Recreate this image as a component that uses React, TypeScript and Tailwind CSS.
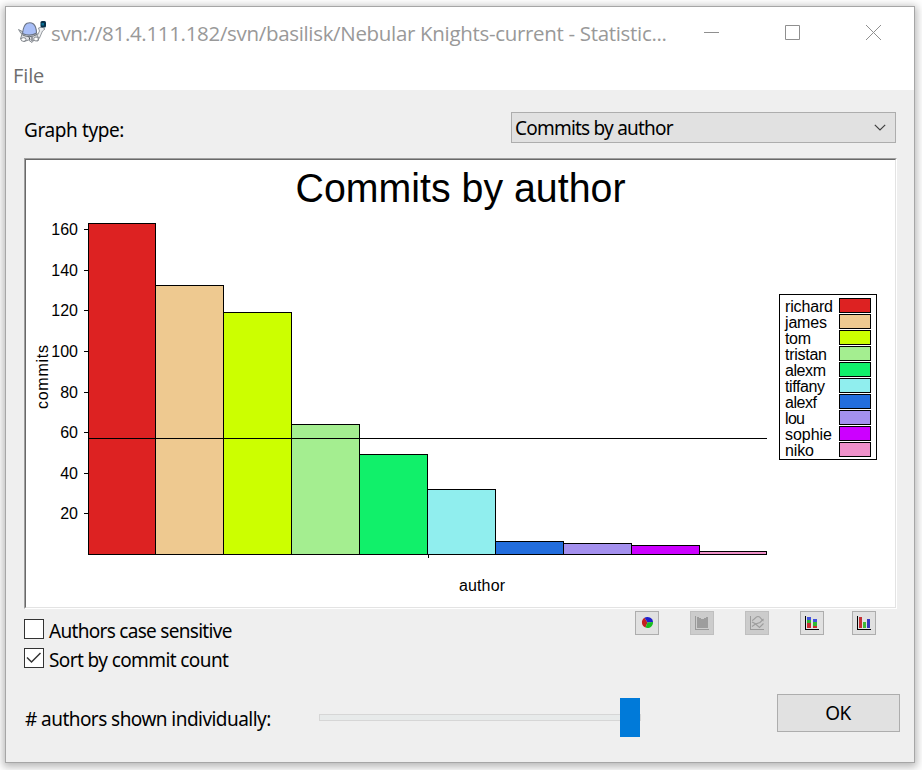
import React from "react";

const authors = [
  { name: "richard", color: "#dd2222", left: 88, top: 223, width: 48 },
  { name: "james", color: "#eec990", left: 155, top: 285, width: 42 },
  { name: "tom", color: "#ccff00", left: 223, top: 312, width: 26 },
  { name: "tristan", color: "#a4ee90", left: 291, top: 424, width: 42 },
  { name: "alexm", color: "#11f06a", left: 359, top: 454, width: 41 },
  { name: "tiffany", color: "#90eeee", left: 427, top: 489, width: 40 },
  { name: "alexf", color: "#226ddd", left: 495, top: 541, width: 32 },
  { name: "lou", color: "#a490ee", left: 563, top: 543, width: 20 },
  { name: "sophie", color: "#cc00ff", left: 631, top: 545, width: 47 },
  { name: "niko", color: "#ee90c9", left: 699, top: 551, width: 29 },
];

const ticks = [
  [160, 229],
  [140, 270],
  [120, 310],
  [100, 351],
  [80, 392],
  [60, 432],
  [40, 473],
  [20, 513],
];

function Chart() {
  return (
    <svg
      width="869"
      height="447"
      viewBox="26 160 869 447"
      className="block font-['Liberation_Sans',Arial,sans-serif]"
      fontSize="16"
    >
      <text x="295.500" y="202" fontSize="41.5" textLength="330" lengthAdjust="spacingAndGlyphs">
        Commits by author
      </text>
      {ticks.map(([value, y]) => (
        <g key={value}>
          <rect x="84" y={y} width="4" height="1" />
          <text x="78" y={y + 6} textAnchor="end">
            {value}
          </text>
        </g>
      ))}
      <text transform="translate(48 409) rotate(-90)" textLength="64">
        commits
      </text>
      {authors.map((a, i) => {
        const right = i < authors.length - 1 ? authors[i + 1].left : 766;
        return (
          <rect
            key={a.name}
            x={a.left + 0.5}
            y={a.top + 0.5}
            width={right - a.left}
            height={554 - a.top}
            fill={a.color}
            stroke="#000"
          />
        );
      })}
      <rect x="88" y="438" width="679" height="1" />
      <rect x="428" y="555" width="1" height="3" />
      <text x="459" y="591" textLength="46">
        author
      </text>
      <rect x="779.5" y="294.5" width="97" height="165" fill="#fff" stroke="#000" />
      {authors.map((a, i) => (
        <g key={a.name}>
          <text x="785" y={312 + i * 16} textLength={a.width}>
            {a.name}
          </text>
          <rect x="839.5" y={298.5 + i * 16} width="31" height="14" fill={a.color} stroke="#000" />
        </g>
      ))}
    </svg>
  );
}

function Turtle() {
  return (
    <svg width="28" height="23" viewBox="0 0 28 23">
      <path d="M.500 8.500 L5.500 11 L6 14.500 L3 12.500Z" fill="#c4c8cc" stroke="#777d84" strokeWidth=".8" />
      <path
        d="M4 13 L21 13 L21 17 L20 20 L16 19 L14 21.500 L10.500 19 L6 20.500 L2.500 18Z"
        fill="#dfe1e5"
        stroke="#858a90"
        strokeWidth="1"
      />
      <path d="M19 15 L21.500 10 L20.500 7 L24 6 L27 8 L24.500 10 L21.500 17Z" fill="#eceef0" stroke="#7d8389" strokeWidth=".8" />
      <path
        d="M4.500 12.500 Q5.500 4 9 2.300 Q12.500 .800 15.500 3 Q18.500 6 18.500 12 Q12 16 4.500 12.500Z"
        fill="#a9bff8"
        stroke="#6b7486"
        strokeWidth="1.100"
      />
      <path d="M4.500 14 Q12 17.500 19 13.500" fill="none" stroke="#6a7078" strokeWidth="1" />
      <ellipse cx="5.500" cy="18.500" rx="2.500" ry="1.800" fill="#fff" stroke="#70757b" strokeWidth=".8" />
      <ellipse cx="18" cy="18" rx="2.300" ry="2" fill="#fff" stroke="#70757b" strokeWidth=".8" />
      <path d="M11 16 L12 19 M14 16 L14 20" fill="none" stroke="#50555c" />
      <rect x="22.500" y="0" width="5.500" height="6.500" rx="1.500" fill="#07304a" />
      <rect x="23.500" y="2" width="2.500" height="2.500" fill="#087095" />
    </svg>
  );
}

function ToolButton({ disabled = false, children }: { disabled?: boolean; children: React.ReactNode }) {
  return (
    <button
      className={
        disabled
          ? "h-6 w-6 border border-[#bfbfbf] bg-[#cccccc]"
          : "h-6 w-6 border border-[#adadad] bg-[#e1e1e1]"
      }
    >
      <svg width="22" height="22" viewBox="1 1 22 22" shapeRendering="crispEdges">
        {children}
      </svg>
    </button>
  );
}

function Axes({ color = "#000" }: { color?: string }) {
  return (
    <g fill={color}>
      <rect x="5" y="5" width="1" height="14" />
      <rect x="5" y="18" width="14" height="1" />
    </g>
  );
}

export default function App() {
  return (
    <div className="h-[770px] w-[922px] overflow-hidden bg-white pt-[6px] pl-[5px] font-['Noto_Sans',sans-serif] text-[19px] leading-[26px] text-black">
      <div className="flex h-[757px] w-[910px] flex-col border border-[#a6a6a6] bg-[#efefef] shadow-[0_2px_8px_2px_rgba(0,0,0,0.28)]">
        <header className="flex h-[53px] shrink-0 items-center bg-white pb-[2px] pl-3 text-[#999999]">
          <Turtle />
          <h1 className="ml-[5px] w-[640px] text-[20.500px] whitespace-nowrap font-['Open_Sans',sans-serif] tracking-[-0.320px]">
            svn://81.4.111.182/svn/basilisk/Nebular Knights-current - Statistic...
          </h1>
          <svg width="178" height="15" viewBox="0 0 178 15" className="ml-[13px] shrink-0" fill="none" stroke="#8f8f8f">
            <path d="M0 7.500H15M81.500 .5h14v14h-14zM162 0l15 15M177 0l-15 15" />
          </svg>
        </header>
        <nav className="flex h-[30px] shrink-0 items-start bg-white pt-[3px] pl-[7px] font-['Open_Sans',sans-serif] text-[20px] tracking-[-0.100px] text-[#6d6d6d]">
          File
        </nav>
        <main className="flex flex-col pr-[14px] pl-[18px]">
          <div className="mt-[22px] flex h-[31px] items-center justify-between pr-1">
            <label className="pt-[5px] tracking-[-0.400px]">Graph type:</label>
            <div className="flex h-[31px] w-[385px] items-center justify-between border border-[#adadad] bg-[#e1e1e1] pr-[9px] pl-[3px]">
              <span className="tracking-[-0.780px]">Commits by author</span>
              <svg width="12" height="7" viewBox="0 0 12 7" fill="none" stroke="#404040" strokeWidth="1.200">
                <path d="M.8 .8L6 6L11.200 .8" />
              </svg>
            </div>
          </div>
          <div className="mt-[15px] w-[873px] border border-t-[#a0a0a0] border-r-white border-b-white border-l-[#a0a0a0]">
            <div className="border border-t-[#696969] border-r-[#e3e3e3] border-b-[#e3e3e3] border-l-[#696969] bg-white">
              <Chart />
            </div>
          </div>
          <div className="flex h-[65px] items-start justify-between pt-[2px]">
            <div className="flex flex-col gap-[9px] pt-2">
              <div className="flex h-5 items-center gap-[5px]">
                <span className="h-5 w-5 border border-[#333333] bg-white" />
                <span className="pt-[3px] tracking-[-0.700px]">Authors case sensitive</span>
              </div>
              <div className="flex h-5 items-center gap-[5px]">
                <span className="flex h-5 w-5 items-center justify-center border border-[#333333] bg-white">
                  <svg width="16" height="12" viewBox="0 0 16 12" fill="none" stroke="#333" strokeWidth="1.500">
                    <path d="M1 5.500L5.500 10L14.500 1" />
                  </svg>
                </span>
                <span className="pt-[3px] tracking-[-0.600px]">Sort by commit count</span>
              </div>
            </div>
            <div className="flex pr-6">
              <ToolButton>
                <g shapeRendering="auto">
                  <path d="M12.500 11.500L9.500 6.800A5.500 5.500 0 0 0 10.500 16.600Z" fill="#c42020" />
                  <path d="M12.500 11.500L9.500 6.800A5.500 5.500 0 0 1 18 11Z" fill="#2020cc" />
                  <path d="M12.500 11.500L18 11A5.500 5.500 0 0 1 10.500 16.600Z" fill="#16bd20" />
                </g>
              </ToolButton>
              <span className="w-[31px]" />
              <ToolButton disabled>
                <Axes color="#9a9a9a" />
                <path d="M7 6h2v1h2v1h3v-1h2v-1h2v11H7z" fill="#9d9d9d" />
              </ToolButton>
              <span className="w-[31px]" />
              <ToolButton disabled>
                <Axes color="#9a9a9a" />
                <g fill="none" stroke="#9d9d9d" strokeWidth="1.100" shapeRendering="auto">
                  <path d="M7 9.500C10 9 10 5.500 13 5.500S16 9 18.500 10" />
                  <path d="M7 11L10 12.500L14.500 16.500L18.500 12.500" />
                  <path d="M7 15.500L10.500 13L15 11.500L18.500 8" />
                </g>
              </ToolButton>
              <span className="w-[31px]" />
              <ToolButton>
                <Axes />
                <path d="M7 6h4v3H7zM13 8h4v3h-4z" fill="#4050dd" />
                <path d="M7 9h4v3H7zM13 11h4v4h-4z" fill="#30b830" />
                <path d="M7 12h4v5H7zM13 15h4v2h-4z" fill="#c82d30" />
              </ToolButton>
              <span className="w-7" />
              <ToolButton>
                <Axes />
                <path d="M7 6h3v11H7z" fill="#c43034" />
                <path d="M11 11h3v6h-3z" fill="#40b83a" />
                <path d="M15 8h3v9h-3z" fill="#3538c0" />
              </ToolButton>
            </div>
          </div>
          <div className="mt-[20px] flex h-[39px] items-start">
            <label className="w-[295px] pt-3 pl-px tracking-[-0.550px]"># authors shown individually:</label>
            <div className="relative mt-1 flex h-[39px] w-[322px] items-center">
              <div className="h-[7px] w-full border border-[#d6d6d6] bg-[#e7eaea]" />
              <div className="absolute top-0 left-[301px] h-[39px] w-5 bg-[#007ad9]" />
            </div>
            <button className="ml-[136px] h-[38px] w-[123px] border border-[#adadad] bg-[#e1e1e1] pr-px tracking-[-0.500px]">
              OK
            </button>
          </div>
        </main>
      </div>
    </div>
  );
}
